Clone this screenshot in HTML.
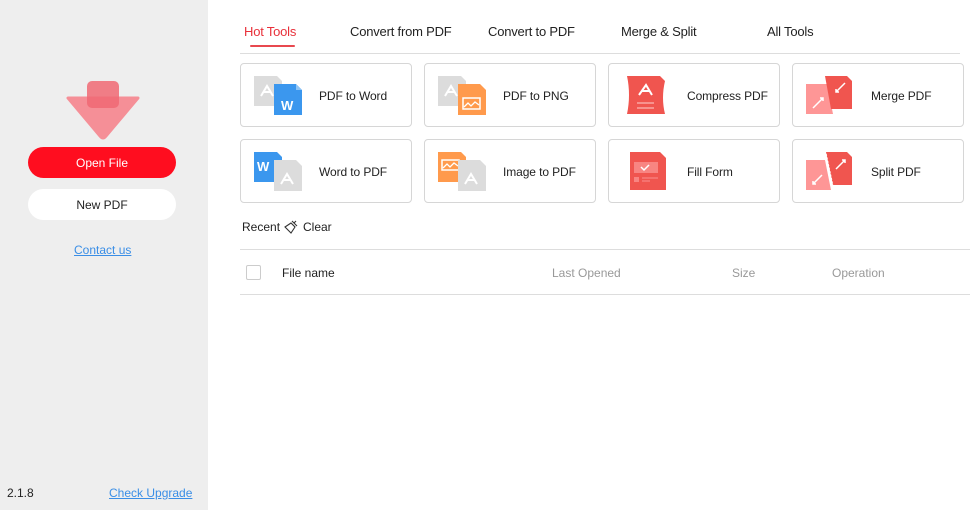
<!DOCTYPE html>
<html><head><meta charset="utf-8"><style>
*{margin:0;padding:0;box-sizing:border-box}
body{width:978px;height:510px;font-family:"Segoe UI","Liberation Sans",sans-serif;font-size:12px;color:#222;background:#fff;position:relative;overflow:hidden}
.side{position:absolute;left:0;top:0;width:208px;height:510px;background:#eeeeee}
.btn{position:absolute;left:28px;width:148px;height:31px;border-radius:16px;text-align:center;line-height:32px;font-size:12px}
.abs{position:absolute}
.tab{position:absolute;top:24px;font-size:13px;color:#222;letter-spacing:-0.2px}
.card{position:absolute;width:172px;height:64px;border:1px solid #d6d6d6;border-radius:4px;background:#fff}
.card svg{position:absolute;left:12px;top:10px}
.card span{position:absolute;left:78px;top:25px;font-size:12px;letter-spacing:-0.1px}
.line{position:absolute;left:240px;width:730px;height:1px;background:#ddd}
.hd{position:absolute;top:266px;color:#999}
</style></head><body>
<div class="side">
<svg class="abs" style="left:66px;top:80px" width="76" height="60" viewBox="0 0 76 60">
<path d="M2 18 H72 L40 56 Q37 60 34 56 Z" fill="#f58f97" stroke="#f58f97" stroke-linejoin="round" stroke-width="3"/>
<rect x="21" y="1" width="32" height="27" rx="5" fill="#f06873" opacity="0.85"/>
</svg>
<div class="btn" style="top:147px;background:#ff0d1f;color:#fff">Open File</div>
<div class="btn" style="top:189px;background:#fff;color:#222">New PDF</div>
<div class="abs" style="left:74px;top:243px;color:#3a8ee6;text-decoration:underline">Contact us</div>
<div class="abs" style="left:7px;top:486px;color:#222">2.1.8</div>
<div class="abs" style="left:109px;top:486px;color:#3a8ee6;text-decoration:underline">Check Upgrade</div>
</div>

<div class="tab" style="left:244px;color:#e8303a">Hot Tools</div>
<div class="abs" style="left:250px;top:45px;width:45px;height:2px;background:#e8484f;border-radius:1px"></div>
<div class="tab" style="left:350px">Convert from PDF</div>
<div class="tab" style="left:488px">Convert to PDF</div>
<div class="tab" style="left:621px">Merge &amp; Split</div>
<div class="tab" style="left:767px">All Tools</div>
<div class="line" style="top:53px;width:720px"></div>

<!-- row1 -->
<div class="card" style="left:240px;top:63px">
<svg width="50" height="44" viewBox="0 0 50 44"><path d="M1 2H24L29 7V32H1Z" fill="#dcdcdc"/><path d="M8 22L14 12L20 22M11 18H17" stroke="#fff" stroke-width="2" fill="none"/><path d="M21 10H43L49 16V41H21Z" fill="#3b97ee"/><path d="M43 10V16H49" fill="#8ec4f5"/><text x="28" y="36" font-size="13" font-weight="bold" fill="#fff" font-family="Liberation Sans">W</text></svg>
<span>PDF to Word</span></div>
<div class="card" style="left:424px;top:63px">
<svg width="50" height="44" viewBox="0 0 50 44"><path d="M1 2H24L29 7V32H1Z" fill="#dcdcdc"/><path d="M8 22L14 12L20 22M11 18H17" stroke="#fff" stroke-width="2" fill="none"/><path d="M21 10H43L49 16V41H21Z" fill="#ff9a4c"/><rect x="26" y="24" width="17" height="11" fill="none" stroke="#fff" stroke-width="1.5"/><path d="M27 33L31 29L34 32L38 28L42 31" stroke="#fff" stroke-width="1.3" fill="none"/></svg>
<span>PDF to PNG</span></div>
<div class="card" style="left:608px;top:63px">
<svg width="50" height="44" viewBox="0 0 50 44"><path d="M6 2H39L44 7Q40 24 44 40H6Q10 21 6 2Z" fill="#f0554f"/><path d="M18 21L25 11L31 21M21 17H28" stroke="#fff" stroke-width="2" fill="none"/><path d="M16 29H33M16 34H33" stroke="#f9a7a3" stroke-width="1.5"/></svg>
<span>Compress PDF</span></div>
<div class="card" style="left:792px;top:63px">
<svg width="50" height="44" viewBox="0 0 50 44"><path d="M1 10H22L28 40H1Z" fill="#fe9696"/><path d="M20 2H42L47 7V35H26Z" fill="#f0554f"/><path d="M8 34L18 24M15 24H18V27" stroke="#fff" stroke-width="1.5" fill="none"/><path d="M40 9L31 18M31 15V18H34" stroke="#fff" stroke-width="1.5" fill="none"/></svg>
<span>Merge PDF</span></div>
<!-- row2 -->
<div class="card" style="left:240px;top:139px">
<svg width="50" height="44" viewBox="0 0 50 44"><path d="M1 2H24L29 7V32H1Z" fill="#3b97ee"/><text x="4" y="21" font-size="13" font-weight="bold" fill="#fff" font-family="Liberation Sans">W</text><path d="M21 10H43L49 16V41H21Z" fill="#dcdcdc"/><path d="M28 34L34 24L40 34M31 30H37" stroke="#fff" stroke-width="2" fill="none"/></svg>
<span>Word to PDF</span></div>
<div class="card" style="left:424px;top:139px">
<svg width="50" height="44" viewBox="0 0 50 44"><path d="M1 2H24L29 7V32H1Z" fill="#ff9a4c"/><rect x="5" y="10" width="17" height="10" fill="none" stroke="#fff" stroke-width="1.5"/><path d="M6 18L10 14L13 17L17 13L21 16" stroke="#fff" stroke-width="1.3" fill="none"/><path d="M21 10H43L49 16V41H21Z" fill="#dcdcdc"/><path d="M28 34L34 24L40 34M31 30H37" stroke="#fff" stroke-width="2" fill="none"/></svg>
<span>Image to PDF</span></div>
<div class="card" style="left:608px;top:139px">
<svg width="50" height="44" viewBox="0 0 50 44"><path d="M9 2H39L45 8V40H9Z" fill="#f0554f"/><rect x="13" y="12" width="24" height="11" fill="#f88582"/><path d="M20 17L23 20L28 15" stroke="#fff" stroke-width="1.5" fill="none"/><rect x="13" y="27" width="5" height="5" fill="#f88582"/><path d="M21 28H37M21 31H29" stroke="#f88582" stroke-width="1.3"/></svg>
<span>Fill Form</span></div>
<div class="card" style="left:792px;top:139px">
<svg width="50" height="44" viewBox="0 0 50 44"><path d="M1 10H20L26 40H1Z" fill="#fe9696"/><path d="M21 2H42L47 7V35H28Z" fill="#f0554f"/><path d="M21 4L28 37" stroke="#fff" stroke-width="1.5" stroke-dasharray="2 1.5"/><path d="M17 25L8 34M8 31V34H11" stroke="#fff" stroke-width="1.5" fill="none"/><path d="M31 19L40 10M37 10H40V13" stroke="#fff" stroke-width="1.5" fill="none"/></svg>
<span>Split PDF</span></div>

<div class="abs" style="left:242px;top:220px">Recent</div>
<svg class="abs" style="left:283px;top:219px" width="16" height="16" viewBox="0 0 16 16"><path d="M9 2L14 7M11 4L13 2M2 8L8 4L12 8L8 14Z M4 10L7 13" stroke="#333" stroke-width="1.1" fill="none"/></svg>
<div class="abs" style="left:303px;top:220px">Clear</div>
<div class="line" style="top:249px"></div>
<div class="abs" style="left:246px;top:265px;width:15px;height:15px;border:1px solid #ccc;border-radius:2px"></div>
<div class="hd" style="left:282px;color:#222">File name</div>
<div class="hd" style="left:552px">Last Opened</div>
<div class="hd" style="left:732px">Size</div>
<div class="hd" style="left:832px">Operation</div>
<div class="line" style="top:294px"></div>
</body></html>
